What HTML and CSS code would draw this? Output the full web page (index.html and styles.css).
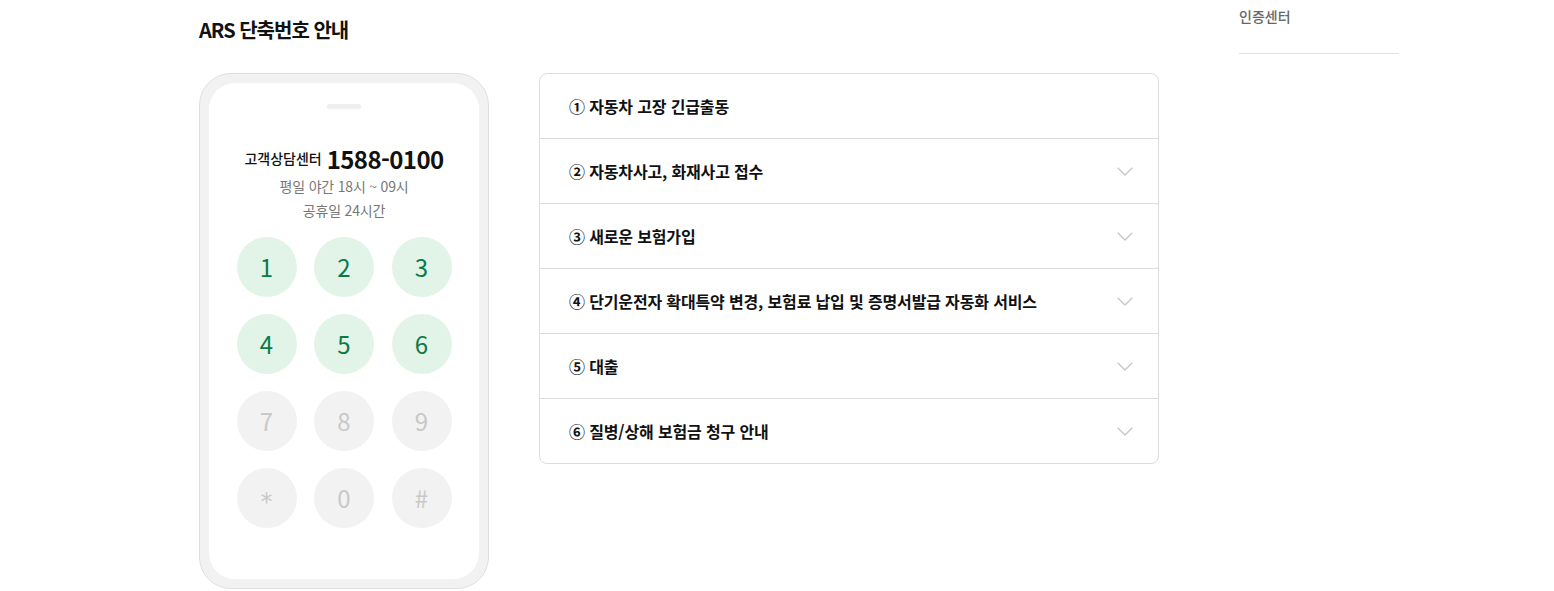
FILE: index.html
```html
<!DOCTYPE html>
<html lang="ko">
<head>
<meta charset="utf-8">
<title>ARS 단축번호 안내</title>
<link rel="stylesheet" href="styles.css">
</head>
<body>
<div class="page">
  <main class="main">
    <h2 class="title">ARS 단축번호 안내</h2>
    <div class="content">
      <div class="phone">
        <div class="screen">
          <div class="notch"></div>
          <p class="center-line"><span class="center-label">고객상담센터</span> <strong class="center-num">1588-0100</strong></p>
          <p class="hours">평일 야간 18시 ~ 09시</p>
          <p class="hours">공휴일 24시간</p>
          <div class="keypad">
            <span class="key on">1</span>
            <span class="key on">2</span>
            <span class="key on">3</span>
            <span class="key on">4</span>
            <span class="key on">5</span>
            <span class="key on">6</span>
            <span class="key">7</span>
            <span class="key">8</span>
            <span class="key">9</span>
            <span class="key star">*</span>
            <span class="key">0</span>
            <span class="key">#</span>
          </div>
        </div>
      </div>
      <ul class="acc">
        <li class="acc-item"><span>① 자동차 고장 긴급출동</span></li>
        <li class="acc-item"><span>② 자동차사고, 화재사고 접수</span><svg class="chev" width="16" height="9" viewBox="0 0 16 9"><polyline points="0.7,0.7 8,8 15.3,0.7" fill="none" stroke="#c8c8c8" stroke-width="1.4"/></svg></li>
        <li class="acc-item"><span>③ 새로운 보험가입</span><svg class="chev" width="16" height="9" viewBox="0 0 16 9"><polyline points="0.7,0.7 8,8 15.3,0.7" fill="none" stroke="#c8c8c8" stroke-width="1.4"/></svg></li>
        <li class="acc-item"><span>④ 단기운전자 확대특약 변경, 보험료 납입 및 증명서발급 자동화 서비스</span><svg class="chev" width="16" height="9" viewBox="0 0 16 9"><polyline points="0.7,0.7 8,8 15.3,0.7" fill="none" stroke="#c8c8c8" stroke-width="1.4"/></svg></li>
        <li class="acc-item"><span>⑤ 대출</span><svg class="chev" width="16" height="9" viewBox="0 0 16 9"><polyline points="0.7,0.7 8,8 15.3,0.7" fill="none" stroke="#c8c8c8" stroke-width="1.4"/></svg></li>
        <li class="acc-item"><span>⑥ 질병/상해 보험금 청구 안내</span><svg class="chev" width="16" height="9" viewBox="0 0 16 9"><polyline points="0.7,0.7 8,8 15.3,0.7" fill="none" stroke="#c8c8c8" stroke-width="1.4"/></svg></li>
      </ul>
    </div>
  </main>
  <aside class="aside">
    <p class="aside-link">인증센터</p>
  </aside>
</div>
</body>
</html>
```

FILE: styles.css
```css
* { box-sizing: border-box; }
html, body { margin: 0; padding: 0; background: #fff; }
body {
  font-family: "Noto Sans CJK KR", "Noto Sans", sans-serif;
  color: #111;
}
.page {
  display: flex;
  padding-left: 199px;
}
.main { width: 960px; padding-top: 18px; }
.title {
  margin: 0;
  font-size: 20px;
  line-height: 24px;
  font-weight: 700;
  letter-spacing: -1px;
  color: #111;
}
.content {
  display: flex;
  gap: 50px;
  margin-top: 31px;
  align-items: flex-start;
}
.phone {
  width: 290px;
  height: 516px;
  flex: none;
  background: #f2f2f2;
  border: 1px solid #dedede;
  border-radius: 32px;
  padding: 9px;
}
.screen {
  height: 100%;
  background: #fff;
  border-radius: 26px;
  padding-top: 21px;
  display: flex;
  flex-direction: column;
  align-items: center;
}
.notch {
  width: 34px;
  height: 5px;
  border-radius: 3px;
  background: #efefef;
}
.center-line {
  margin: 33px 0 0;
  height: 32px;
  display: flex;
  align-items: center;
  gap: 5px;
}
.center-label {
  font-size: 14px;
  font-weight: 500;
  letter-spacing: 0;
  color: #111;
}
.center-num {
  font-size: 24px;
  font-weight: 700;
  letter-spacing: -0.6px;
  color: #111;
}
.hours {
  margin: 0;
  font-size: 14px;
  line-height: 24px;
  color: #777;
  letter-spacing: -0.2px;
}
.keypad {
  margin-top: 15px;
  display: grid;
  grid-template-columns: repeat(3, 60px);
  column-gap: 17.5px;
  row-gap: 17px;
}
.key {
  width: 60px;
  height: 60px;
  border-radius: 50%;
  background: #f2f2f2;
  color: #c8c8c8;
  font-size: 24px;
  display: flex;
  align-items: center;
  justify-content: center;
  line-height: 1;
}
.key.star {
  font-family: "DejaVu Sans", sans-serif;
  font-size: 24px;
  padding-top: 8px;
}
.key.on {
  background: #e2f4e8;
  color: #0b7a46;
}
.acc {
  list-style: none;
  margin: 0;
  padding: 0;
  width: 620px;
  border: 1px solid #dcdcdc;
  border-radius: 8px;
}
.acc-item {
  height: 65px;
  display: flex;
  align-items: center;
  justify-content: space-between;
  padding: 0 25px 0 29px;
  border-top: 1px solid #dcdcdc;
  font-size: 16px;
  font-weight: 700;
  letter-spacing: -0.15px;
  color: #111;
}
.acc-item:first-child { border-top: 0; height: 64px; }
.chev { flex: none; }
.aside {
  width: 160px;
  margin-left: 80px;
}
.aside-link {
  margin: 6px 0 0;
  font-size: 14px;
  line-height: 20px;
  color: #666;
  font-weight: 500;
  padding-bottom: 27px;
  border-bottom: 1px solid #e2e2e2;
  letter-spacing: 0;
}
```
